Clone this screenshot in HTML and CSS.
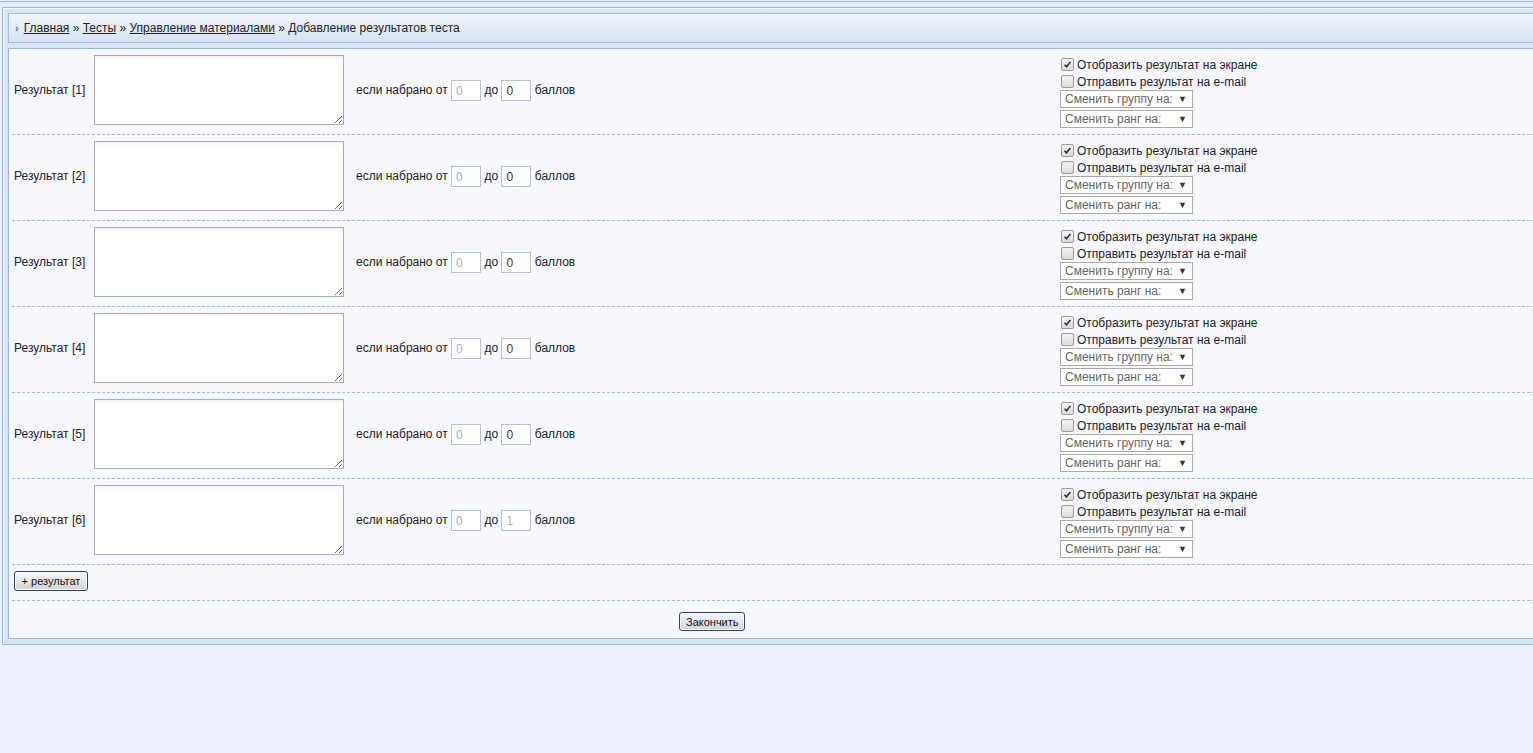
FILE: index.html
```html
<!DOCTYPE html>
<html lang="ru">
<head>
<meta charset="utf-8">
<title>Добавление результатов теста</title>
<link rel="stylesheet" href="styles.css">
</head>
<body>
<div class="topline"></div>
<div class="frame">
  <div class="crumbs"><span class="arrow">›</span><a href="#">Главная</a> » <a href="#">Тесты</a> » <a href="#">Управление материалами</a> » Добавление результатов теста</div>
  <div class="panel">

    <div class="row">
      <div class="label">Результат [1]</div>
      <textarea class="text"></textarea>
      <div class="score">если набрано от <span class="num dim">0</span> до <span class="num">0</span> баллов</div>
      <div class="opts">
        <div class="check"><span class="box"><svg viewBox="0 0 13 13" width="13" height="13"><path d="M3 6.8 L5.3 9.2 L10 3.6" fill="none" stroke="#2b2b2b" stroke-width="1.8"/></svg></span>Отобразить результат на экране</div>
        <div class="check"><span class="box"></span>Отправить результат на e-mail</div>
        <div class="select">Сменить группу на:<span class="caret">▼</span></div>
        <div class="select">Сменить ранг на:<span class="caret">▼</span></div>
      </div>
    </div>

    <div class="row">
      <div class="label">Результат [2]</div>
      <textarea class="text"></textarea>
      <div class="score">если набрано от <span class="num dim">0</span> до <span class="num">0</span> баллов</div>
      <div class="opts">
        <div class="check"><span class="box"><svg viewBox="0 0 13 13" width="13" height="13"><path d="M3 6.8 L5.3 9.2 L10 3.6" fill="none" stroke="#2b2b2b" stroke-width="1.8"/></svg></span>Отобразить результат на экране</div>
        <div class="check"><span class="box"></span>Отправить результат на e-mail</div>
        <div class="select">Сменить группу на:<span class="caret">▼</span></div>
        <div class="select">Сменить ранг на:<span class="caret">▼</span></div>
      </div>
    </div>

    <div class="row">
      <div class="label">Результат [3]</div>
      <textarea class="text"></textarea>
      <div class="score">если набрано от <span class="num dim">0</span> до <span class="num">0</span> баллов</div>
      <div class="opts">
        <div class="check"><span class="box"><svg viewBox="0 0 13 13" width="13" height="13"><path d="M3 6.8 L5.3 9.2 L10 3.6" fill="none" stroke="#2b2b2b" stroke-width="1.8"/></svg></span>Отобразить результат на экране</div>
        <div class="check"><span class="box"></span>Отправить результат на e-mail</div>
        <div class="select">Сменить группу на:<span class="caret">▼</span></div>
        <div class="select">Сменить ранг на:<span class="caret">▼</span></div>
      </div>
    </div>

    <div class="row">
      <div class="label">Результат [4]</div>
      <textarea class="text"></textarea>
      <div class="score">если набрано от <span class="num dim">0</span> до <span class="num">0</span> баллов</div>
      <div class="opts">
        <div class="check"><span class="box"><svg viewBox="0 0 13 13" width="13" height="13"><path d="M3 6.8 L5.3 9.2 L10 3.6" fill="none" stroke="#2b2b2b" stroke-width="1.8"/></svg></span>Отобразить результат на экране</div>
        <div class="check"><span class="box"></span>Отправить результат на e-mail</div>
        <div class="select">Сменить группу на:<span class="caret">▼</span></div>
        <div class="select">Сменить ранг на:<span class="caret">▼</span></div>
      </div>
    </div>

    <div class="row">
      <div class="label">Результат [5]</div>
      <textarea class="text"></textarea>
      <div class="score">если набрано от <span class="num dim">0</span> до <span class="num">0</span> баллов</div>
      <div class="opts">
        <div class="check"><span class="box"><svg viewBox="0 0 13 13" width="13" height="13"><path d="M3 6.8 L5.3 9.2 L10 3.6" fill="none" stroke="#2b2b2b" stroke-width="1.8"/></svg></span>Отобразить результат на экране</div>
        <div class="check"><span class="box"></span>Отправить результат на e-mail</div>
        <div class="select">Сменить группу на:<span class="caret">▼</span></div>
        <div class="select">Сменить ранг на:<span class="caret">▼</span></div>
      </div>
    </div>

    <div class="row">
      <div class="label">Результат [6]</div>
      <textarea class="text"></textarea>
      <div class="score">если набрано от <span class="num dim">0</span> до <span class="num dim">1</span> баллов</div>
      <div class="opts">
        <div class="check"><span class="box"><svg viewBox="0 0 13 13" width="13" height="13"><path d="M3 6.8 L5.3 9.2 L10 3.6" fill="none" stroke="#2b2b2b" stroke-width="1.8"/></svg></span>Отобразить результат на экране</div>
        <div class="check"><span class="box"></span>Отправить результат на e-mail</div>
        <div class="select">Сменить группу на:<span class="caret">▼</span></div>
        <div class="select">Сменить ранг на:<span class="caret">▼</span></div>
      </div>
    </div>

    <div class="addrow"><button class="btn">+ результат</button></div>
    <div class="finish"><button class="btn">Закончить</button></div>
  </div>
</div>
</body>
</html>
```

FILE: styles.css
```css
html, body {
  margin: 0;
  padding: 0;
  overflow: hidden;
}
body {
  background: #ebf0fa;
  font-family: "Liberation Sans", Arial, sans-serif;
  font-size: 12px;
  color: #222;
  width: 1700px;
}
.topline {
  margin-top: 1px;
  border-top: 1px solid #9fb1cc;
  height: 5px;
  background: #e4ecf8;
}
.frame {
  margin-left: 2px;
  border: 1px solid #a2b5d2;
  border-right: none;
  background: #d9e5f6;
  padding: 5px 0 5px 5px;
  box-shadow: inset 1px 1px 0 #f4f7fc;
}
.crumbs {
  height: 28px;
  border: 1px solid #a6b9d6;
  border-right: none;
  background: linear-gradient(#f2f5fb, #d6e2f4);
  display: flex;
  align-items: center;
  padding-left: 6px;
  white-space: pre;
  color: #222;
}
.crumbs .arrow {
  color: #5677aa;
  font-size: 11px;
  font-weight: bold;
  margin-right: 5px;
}
.crumbs a {
  color: #222;
  text-decoration: underline;
}
.panel {
  margin-top: 5px;
  border: 1px solid #a2b5d2;
  border-right: none;
  background: #f6f8fd;
  padding-left: 3px;
}
.row {
  display: flex;
  align-items: center;
  height: 70px;
  padding: 6px 0 9px;
  border-bottom: 1px dashed #a9b9d6;
}
.label {
  width: 78px;
  padding-left: 2px;
}
.text {
  width: 250px;
  height: 70px;
  box-sizing: border-box;
  margin: 0 0 0 2px;
  border: 1px solid #a9acb2;
  background: #fff;
  box-shadow: inset 0 3px 4px -2px rgba(0, 0, 0, 0.08);
  resize: both;
  font-family: inherit;
}
.score {
  width: 704px;
  margin-left: 12px;
  display: flex;
  align-items: center;
  white-space: pre;
}
.num {
  display: inline-block;
  width: 30px;
  height: 21px;
  box-sizing: border-box;
  border: 1px solid #b8c2cf;
  background: #fff;
  padding-left: 4px;
  line-height: 20px;
  color: #333;
  margin: 0;
}
.num.dim {
  color: #b0b0b0;
}
.opts {
  align-self: flex-start;
  margin-top: 1px;
  display: flex;
  flex-direction: column;
}
.check {
  height: 17px;
  display: flex;
  align-items: center;
}
.box {
  width: 13px;
  height: 13px;
  box-sizing: border-box;
  border: 1px solid #9a9a9a;
  border-radius: 2px;
  background: linear-gradient(#f4f4f4, #dcdcdc);
  margin-right: 3px;
  margin-left: 1px;
  display: flex;
  align-items: center;
  justify-content: center;
}
.box svg {
  width: 11px;
  height: 11px;
}
.select {
  width: 133px;
  height: 18px;
  box-sizing: border-box;
  border: 1px solid #a9a9a9;
  background: #fff;
  color: #666;
  display: flex;
  align-items: center;
  justify-content: space-between;
  padding: 0 5px 0 4px;
  margin-bottom: 2px;
}
.caret {
  font-size: 9px;
  color: #333;
}
.addrow {
  padding: 6px 0 9px 2px;
  border-bottom: 1px dashed #a9b9d6;
}
.btn {
  font-family: "Liberation Sans", Arial, sans-serif;
  font-size: 11px;
  color: #111;
  background: linear-gradient(#f7f7f7 0%, #e6e6e6 50%, #d2d2d2 100%);
  border: 1px solid #2c4564;
  border-radius: 3px;
  padding: 0 6px;
  height: 20px;
  box-shadow: inset 0 0 0 1px #fff;
}
.addrow .btn {
  width: 74px;
}
.finish {
  width: 1400px;
  text-align: center;
  padding: 11px 0 7px;
}
.finish .btn {
  width: 66px;
  height: 19px;
}
```
